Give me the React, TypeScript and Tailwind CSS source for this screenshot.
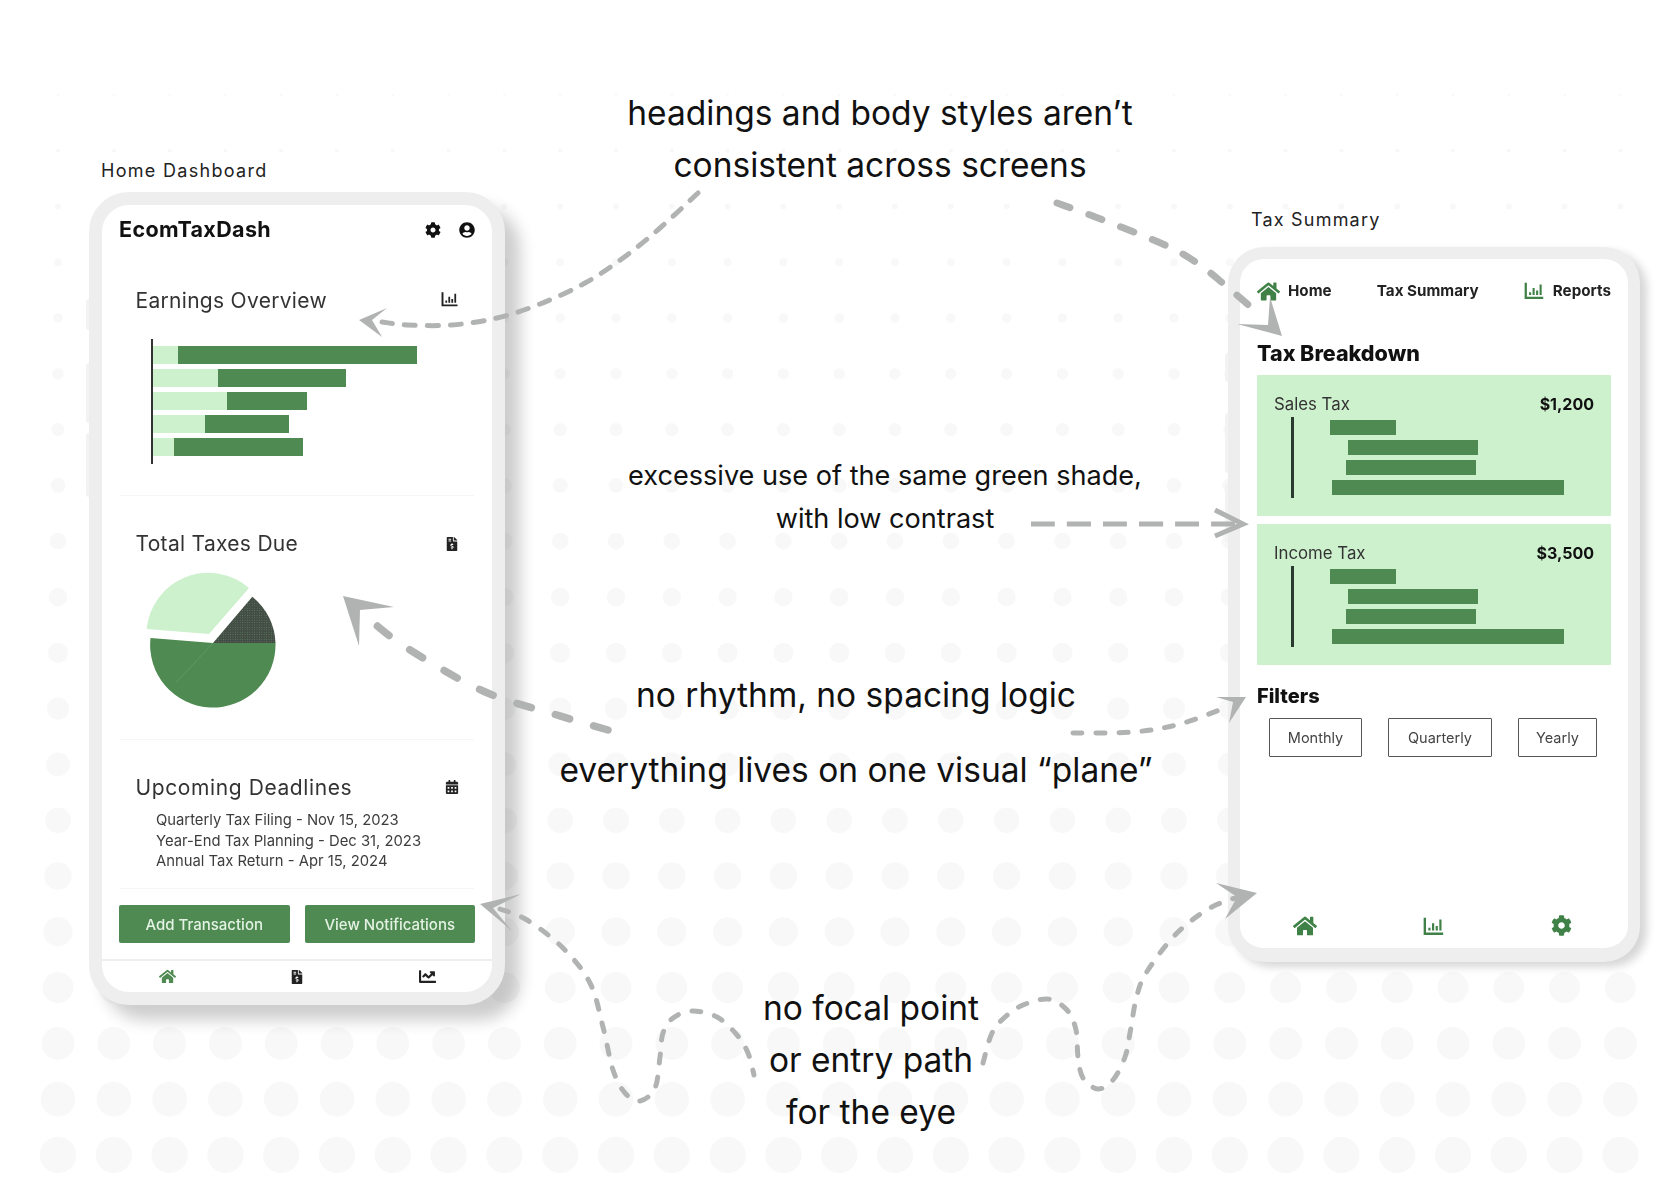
import { FaCalendarAlt, FaChartLine, FaCog, FaFileInvoiceDollar, FaHome, FaUserCircle } from "react-icons/fa";

type Pt = [number, number];

const arrowGrey = "#b1b3b2";

// smooth line through the points (catmull-rom to bezier)
function smooth(pts: Pt[]) {
  let d = `M${pts[0][0]} ${pts[0][1]}`;
  for (let i = 0; i < pts.length - 1; i++) {
    const p0 = pts[Math.max(i - 1, 0)];
    const p1 = pts[i];
    const p2 = pts[i + 1];
    const p3 = pts[Math.min(i + 2, pts.length - 1)];
    const c1x = p1[0] + (p2[0] - p0[0]) / 6;
    const c1y = p1[1] + (p2[1] - p0[1]) / 6;
    const c2x = p2[0] - (p3[0] - p1[0]) / 6;
    const c2y = p2[1] - (p3[1] - p1[1]) / 6;
    d += ` C${c1x} ${c1y} ${c2x} ${c2y} ${p2[0]} ${p2[1]}`;
  }
  return d;
}

const dashedLines: { pts: Pt[]; width: number; dash: string; cap?: "round" | "butt" }[] = [
  { pts: [[698, 193], [660, 228], [623, 258], [585, 283], [540, 304], [497, 318], [452, 325], [407, 325], [382, 322]], width: 5, dash: "11 12" },
  { pts: [[1057, 203], [1098, 218], [1165, 245], [1197, 263], [1225, 285], [1260, 315]], width: 7, dash: "14 20" },
  { pts: [[1031, 524], [1243, 524]], width: 5, dash: "24 12", cap: "butt" },
  { pts: [[608, 730], [557, 715], [483, 691], [407, 648], [370, 620]], width: 7.5, dash: "15 25" },
  { pts: [[1073, 733], [1133, 732], [1180, 724], [1227, 707]], width: 5, dash: "9 14" },
  {
    pts: [[500, 909], [527, 920], [563, 948], [590, 983], [603, 1027], [613, 1070], [625, 1093], [640, 1101], [655, 1088], [660, 1057], [663, 1033], [673, 1018], [692, 1011], [717, 1017], [737, 1035], [748, 1053], [754, 1075]],
    width: 5,
    dash: "9 14",
  },
  {
    pts: [[983, 1063], [992, 1033], [1005, 1017], [1023, 1005], [1048, 999], [1067, 1010], [1076, 1030], [1078, 1057], [1083, 1078], [1098, 1089], [1113, 1080], [1125, 1057], [1130, 1033], [1137, 995], [1148, 970], [1177, 933], [1210, 908], [1238, 897]],
    width: 5,
    dash: "9 14",
  },
];

const arrowHeads = [
  "359,320 387,308 372,320 382,337",
  "1282,336 1237,324 1268,325 1270,297",
  "343,596 394,607 360,610 359,646",
  "1246,697 1216,697 1233,702 1229,723",
  "480,904 521,894 493,908 512,931",
  "1257,893 1216,883 1237,897 1225,919",
];

function Backdrop() {
  const cols = Array.from({ length: 29 }, (_, i) => 58 + i * 55.8);
  const rows = Array.from({ length: 20 }, (_, i) => 1155 - i * 55.8);
  return (
    <svg className="absolute inset-0" width={1680} height={1190}>
      {rows.map((y) =>
        cols.map((x) => <circle key={`${x}-${y}`} cx={x} cy={y} r={1.2 + (y - 95) * 0.016} fill="#f8f8f8" />),
      )}
    </svg>
  );
}

function Arrows() {
  return (
    <svg className="absolute inset-0 z-20 pointer-events-none" width={1680} height={1190} fill="none">
      {dashedLines.map((l, i) => (
        <path key={i} d={smooth(l.pts)} stroke={arrowGrey} strokeWidth={l.width} strokeDasharray={l.dash} strokeLinecap={l.cap ?? "round"} />
      ))}
      {arrowHeads.map((p) => (
        <polygon key={p} points={p} fill={arrowGrey} />
      ))}
      <polyline points="1215,510 1243,524 1215,536" stroke={arrowGrey} strokeWidth={5} />
    </svg>
  );
}

function ColumnIcon({ className }: { className?: string }) {
  return (
    <svg viewBox="0 0 24 24" className={className} fill="none" stroke="currentColor">
      <path d="M2 3v17.5h20" strokeWidth="2.6" />
      <path d="M7 17v-3M11 17V9M15 17v-5M19 17V5" strokeWidth="2.4" />
    </svg>
  );
}

function Note({ lines, className }: { lines: string[]; className: string }) {
  return (
    <div className={`absolute z-10 text-center text-[#111] font-['Inter',sans-serif] ${className}`}>
      {lines.map((l) => (
        <p key={l}>{l}</p>
      ))}
    </div>
  );
}

function CardHead({ title, icon, wide }: { title: string; icon: React.ReactNode; wide?: boolean }) {
  return (
    <div className="flex h-[30px] items-center justify-between">
      <h2 className={`text-[21px] text-[#333] ${wide ? "tracking-[0.6px]" : "tracking-[0.3px]"}`}>{title}</h2>
      <span className="text-[#222]">{icon}</span>
    </div>
  );
}

const earnings = [
  { light: 25, dark: 239 },
  { light: 65, dark: 128 },
  { light: 74, dark: 80 },
  { light: 52, dark: 84 },
  { light: 21, dark: 129 },
];

const deadlines = ["Quarterly Tax Filing - Nov 15, 2023", "Year-End Tax Planning - Dec 31, 2023", "Annual Tax Return - Apr 15, 2024"];

function HomeDashboard() {
  return (
    <div className="relative h-[813px] w-[416px] rounded-[40px] border-[13px] border-[#eeeeee] bg-white shadow-[15px_15px_16px_rgba(0,0,0,0.2)]">
      <div className="absolute -left-[16px] top-[94px] h-[31px] w-[3px] rounded-l bg-[#f3f3f3]" />
      <div className="absolute -left-[16px] top-[158px] h-[60px] w-[3px] rounded-l bg-[#f3f3f3]" />
      <div className="absolute -left-[16px] top-[228px] h-[64px] w-[3px] rounded-l bg-[#f3f3f3]" />
      <div className="flex h-full flex-col overflow-hidden rounded-[27px] blur-[0.4px]">
        <header className="flex h-[46px] items-center justify-between px-[17px] pt-[3px]">
          <h1 className="text-[21.5px] font-bold tracking-[0.35px] text-[#111]">EcomTaxDash</h1>
          <div className="flex items-center gap-[18px] text-[#111]">
            <FaCog size={16} />
            <FaUserCircle size={16} />
          </div>
        </header>

        <section className="px-[33.5px] pt-[35px]">
          <CardHead title="Earnings Overview" icon={<ColumnIcon className="mb-[4px] h-[18px] w-[18px]" />} />
          <div className="ml-[15.5px] mt-[23px] flex h-[125px] flex-col gap-[5px] border-l-2 border-[#333] py-[7px]">
            {earnings.map((b) => (
              <div key={b.light} className="flex h-[18px]">
                <div className="bg-[#cdf0cd]" style={{ width: b.light }} />
                <div className="bg-[#4f8a52]" style={{ width: b.dark }} />
              </div>
            ))}
          </div>
        </section>
        <div className="mx-[18px] mt-[31px] h-px bg-[#f6f6f6]" />

        <section className="px-[33.5px] pt-[33px]">
          <CardHead title="Total Taxes Due" icon={<FaFileInvoiceDollar size={14} />} />
          <svg className="ml-[7.5px] mt-[24px] block overflow-visible" width={140} height={130}>
            <defs>
              <pattern id="speckle" width="2.4" height="2.4" patternUnits="userSpaceOnUse">
                <rect width="2.4" height="2.4" fill="#444c46" />
                <circle cx="1.2" cy="1.2" r="0.45" fill="#5f8f63" />
              </pattern>
            </defs>
            <path d="M66 51 L3.7 46 A62 62 0 0 1 106 5 Z" fill="#cdf0cd" />
            <path d="M70 60 L132.5 60 A62.7 62.7 0 1 1 7.5 55 Z" fill="#4f8a52" />
            <path d="M70 60 L109.3 13.7 A62 62 0 0 1 132.5 60 Z" fill="url(#speckle)" />
            <path d="M70 60 L32.7 100" stroke="#6f9f71" strokeWidth="0.6" />
          </svg>
        </section>
        <div className="mx-[18px] mt-[26px] h-px bg-[#f6f6f6]" />

        <section className="px-[33.5px] pt-[33px]">
          <CardHead title="Upcoming Deadlines" wide icon={<FaCalendarAlt size={14} className="mb-[2px]" />} />
          <ul className="mt-[7px] pl-[20.5px] text-[14.8px] leading-[20.6px] text-[#3d3d3d]">
            {deadlines.map((d) => (
              <li key={d} className="whitespace-nowrap">{d}</li>
            ))}
          </ul>
        </section>
        <div className="mx-[18px] mt-[16px] h-px bg-[#f6f6f6]" />

        <div className="mt-[16px] flex gap-[15px] px-[17px]">
          <button className="h-[38px] flex-1 rounded-[2px] bg-[#4f8a52] pt-[2px] text-[15px] font-medium text-[#e4f2e4]">Add Transaction</button>
          <button className="h-[38px] flex-1 rounded-[2px] bg-[#4f8a52] pt-[2px] text-[15px] font-medium text-[#e4f2e4]">View Notifications</button>
        </div>

        <nav className="mt-[16px] grid flex-1 grid-cols-3 items-center justify-items-center border-t-2 border-[#eeeeee] pt-[1px]">
          <FaHome size={17} className="text-[#4f8a52]" />
          <FaFileInvoiceDollar size={14} className="text-[#222]" />
          <FaChartLine size={17} className="text-[#222]" />
        </nav>
      </div>
    </div>
  );
}

const taxBars = [
  { left: 36, width: 66 },
  { left: 54, width: 130 },
  { left: 52, width: 130 },
  { left: 38, width: 232 },
];

function TaxCard({ name, amount }: { name: string; amount: string }) {
  return (
    <div className="h-[141px] rounded-[1px] bg-[#cdf0cd] px-[17px] pt-[18px]">
      <div className="flex h-[22px] items-center justify-between">
        <span className="pt-[2px] text-[16.8px] text-[#333]">{name}</span>
        <span className="text-[16px] font-bold text-[#111]">{amount}</span>
      </div>
      <div className="ml-[17px] mt-[2px] flex h-[81px] flex-col gap-[4.6px] border-l-[3px] border-[#2a3a30] py-[2.7px]">
        {taxBars.map((b) => (
          <div key={b.left} className="h-[15.6px] bg-[#4f8a52]" style={{ marginLeft: b.left, width: b.width }} />
        ))}
      </div>
    </div>
  );
}

function TaxSummary() {
  return (
    <div className="relative h-[715px] w-[412px] rounded-[36px] border-[12px] border-b-[14px] border-[#eeeeee] bg-white shadow-[7px_5px_9px_rgba(0,0,0,0.16)]">
      <div className="absolute -left-[15px] top-[94px] h-[29px] w-[3px] rounded-l bg-[#f3f3f3]" />
      <div className="absolute -left-[15px] top-[154px] h-[60px] w-[3px] rounded-l bg-[#f3f3f3]" />
      <div className="absolute -left-[15px] top-[224px] h-[60px] w-[3px] rounded-l bg-[#f3f3f3]" />
      <div className="flex h-full flex-col overflow-hidden rounded-[24px] blur-[0.4px]">
        <nav className="flex h-[64px] items-center justify-between px-[17px] text-[15.2px] font-bold text-[#222]">
          <span className="flex items-center gap-[8px]">
            <FaHome size={23} className="text-[#3f8146]" />
            Home
          </span>
          <span>Tax Summary</span>
          <span className="flex items-center gap-[8px]">
            <ColumnIcon className="h-[21px] w-[21px] text-[#3f8146]" />
            Reports
          </span>
        </nav>

        <div className="px-[17px] pt-[15px]">
          <h2 className="flex h-[30px] items-center text-[21.5px] font-extrabold text-[#111]">Tax Breakdown</h2>
          <div className="mt-[7px] flex flex-col gap-[8px]">
            <TaxCard name="Sales Tax" amount="$1,200" />
            <TaxCard name="Income Tax" amount="$3,500" />
          </div>
          <h2 className="mt-[17px] flex h-[26px] items-center pt-[1px] text-[20px] font-extrabold text-[#111]">Filters</h2>
          <div className="ml-[12px] mt-[10px] flex gap-[26px]">
            <button className="h-[39px] w-[93px] rounded-[1px] border-[1.5px] border-[#555] text-[14.5px] text-[#444]">Monthly</button>
            <button className="h-[39px] w-[104px] rounded-[1px] border-[1.5px] border-[#555] text-[14.5px] text-[#444]">Quarterly</button>
            <button className="h-[39px] w-[79px] rounded-[1px] border-[1.5px] border-[#555] text-[14.5px] text-[#444]">Yearly</button>
          </div>
        </div>

        <div className="mt-auto grid h-[44px] grid-cols-3 items-center justify-items-center pb-[1px] text-[#3f8146]">
          <FaHome size={24} />
          <ColumnIcon className="h-[22px] w-[22px]" />
          <FaCog size={21} className="mr-[4px]" />
        </div>
      </div>
    </div>
  );
}

export default function App() {
  return (
    <div className="relative h-[1190px] w-[1680px] overflow-hidden bg-white font-['Inter',sans-serif]">
      <Backdrop />

      <p className="absolute left-[101px] top-[160px] z-10 text-[18px] leading-[22px] tracking-[1.3px] text-[#222]">Home Dashboard</p>
      <div className="absolute left-[89px] top-[192px] z-10">
        <HomeDashboard />
      </div>

      <p className="absolute left-[1251px] top-[209px] z-10 text-[18px] leading-[22px] tracking-[1.2px] text-[#222]">Tax Summary</p>
      <div className="absolute left-[1228px] top-[247px] z-10">
        <TaxSummary />
      </div>

      <Note lines={["headings and body styles aren’t", "consistent across screens"]} className="left-[530px] top-[88px] w-[700px] text-[33.5px] leading-[51.5px]" />
      <Note lines={["excessive use of the same green shade,", "with low contrast"]} className="left-[535px] top-[454px] w-[700px] text-[27.1px] leading-[43px]" />
      <Note lines={["no rhythm, no spacing logic"]} className="left-[506px] top-[669px] w-[700px] text-[33.5px] leading-[52px]" />
      <Note lines={["everything lives on one visual “plane”"]} className="left-[506px] top-[744px] w-[700px] text-[33.5px] leading-[52px]" />
      <Note lines={["no focal point", "or entry path", "for the eye"]} className="left-[521px] top-[982px] w-[700px] text-[33.5px] leading-[52px]" />

      <Arrows />
    </div>
  );
}
